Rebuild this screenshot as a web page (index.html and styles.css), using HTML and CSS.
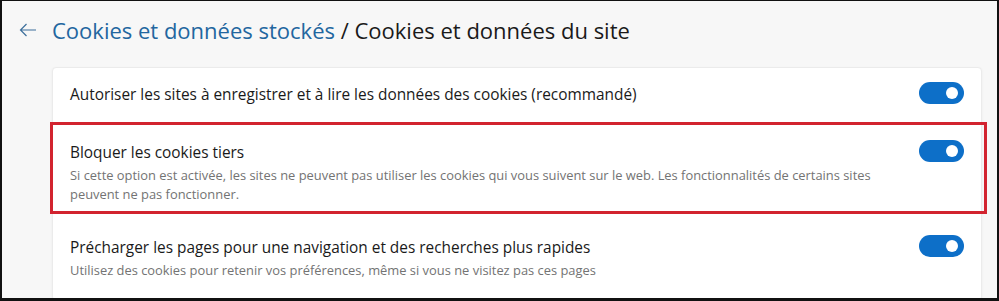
FILE: index.html
```html
<!DOCTYPE html>
<html lang="fr">
<head>
    <meta charset="UTF-8">
    <meta name="viewport" content="width=device-width, initial-scale=1.0">
    <title>Cookies et données du site</title>
    <link rel="stylesheet" href="styles.css">
</head>
<body>
    <div class="frame">
        <div class="header">
            <svg class="back" width="18" height="14" viewBox="0 0 18 14">
                <path d="M17 7H1.5M7.5 1L1.5 7l6 6" fill="none" stroke="#3d6f9c" stroke-width="1.2"/>
            </svg>
            <h1><span class="crumb">Cookies et données stockés</span> / Cookies et données du site</h1>
        </div>

        <div class="card">
            <div class="row row-first">
                <div class="row-text">
                    <div class="row-title">Autoriser les sites à enregistrer et à lire les données des cookies (recommandé)</div>
                </div>
                <span class="toggle"></span>
            </div>

            <div class="row row-highlight">
                <div class="row-text">
                    <div class="row-title">Bloquer les cookies tiers</div>
                    <div class="row-desc">Si cette option est activée, les sites ne peuvent pas utiliser les cookies qui vous suivent sur le web. Les fonctionnalités de certains sites peuvent ne pas fonctionner.</div>
                </div>
                <span class="toggle"></span>
            </div>

            <div class="row row-last">
                <div class="row-text">
                    <div class="row-title">Précharger les pages pour une navigation et des recherches plus rapides</div>
                    <div class="row-desc">Utilisez des cookies pour retenir vos préférences, même si vous ne visitez pas ces pages</div>
                </div>
                <span class="toggle"></span>
            </div>
        </div>
    </div>
</body>
</html>
```

FILE: styles.css
```css
body {
    margin: 0;
    padding: 0;
    font-family: "Open Sans", "Noto Sans", sans-serif;
    background-color: #000;
}

.frame {
    width: 999px;
    height: 301px;
    box-sizing: border-box;
    border: 2px solid #111;
    border-top-width: 1px;
    border-bottom-width: 3px;
    background-color: #f7f7f7;
    overflow: hidden;
}

.header {
    display: flex;
    align-items: center;
    height: 58px;
    padding-left: 15px;
}

.back {
    margin-right: 15px;
    margin-left: 2px;
}

h1 {
    margin: 0;
    font-size: 22px;
    font-weight: 400;
    color: #1a1a1a;
}

.crumb {
    color: #22669f;
}

.card {
    margin: 8px 15px 0 50px;
    background: #fff;
    border: 1px solid #ebebeb;
    border-radius: 4px;
    box-shadow: 0 1px 3px rgba(0, 0, 0, 0.05);
}

.row {
    display: flex;
    justify-content: space-between;
    align-items: flex-start;
    padding: 0 17px;
}

.row-first {
    padding-top: 16px;
    padding-bottom: 16px;
}

.row-highlight {
    position: relative;
    padding-top: 20px;
    padding-bottom: 10px;
}

.row-highlight::after {
    content: "";
    position: absolute;
    top: 0;
    left: -3px;
    right: -6px;
    bottom: 0;
    border: 3px solid #d2232f;
}

.row-last {
    padding-top: 23px;
    padding-bottom: 20px;
}

.row-title {
    font-size: 15.4px;
    line-height: 22px;
    color: #1a1a1a;
}

.row-desc {
    margin-top: 2px;
    font-size: 12.9px;
    line-height: 19px;
    color: #737373;
    max-width: 820px;
}

.toggle {
    position: relative;
    flex-shrink: 0;
    width: 45px;
    height: 22px;
    margin-top: -2px;
    border-radius: 11px;
    background-color: #0d6fc8;
}

.toggle::after {
    content: "";
    position: absolute;
    top: 5px;
    right: 6px;
    width: 12px;
    height: 12px;
    border-radius: 50%;
    background: #fff;
}
```
